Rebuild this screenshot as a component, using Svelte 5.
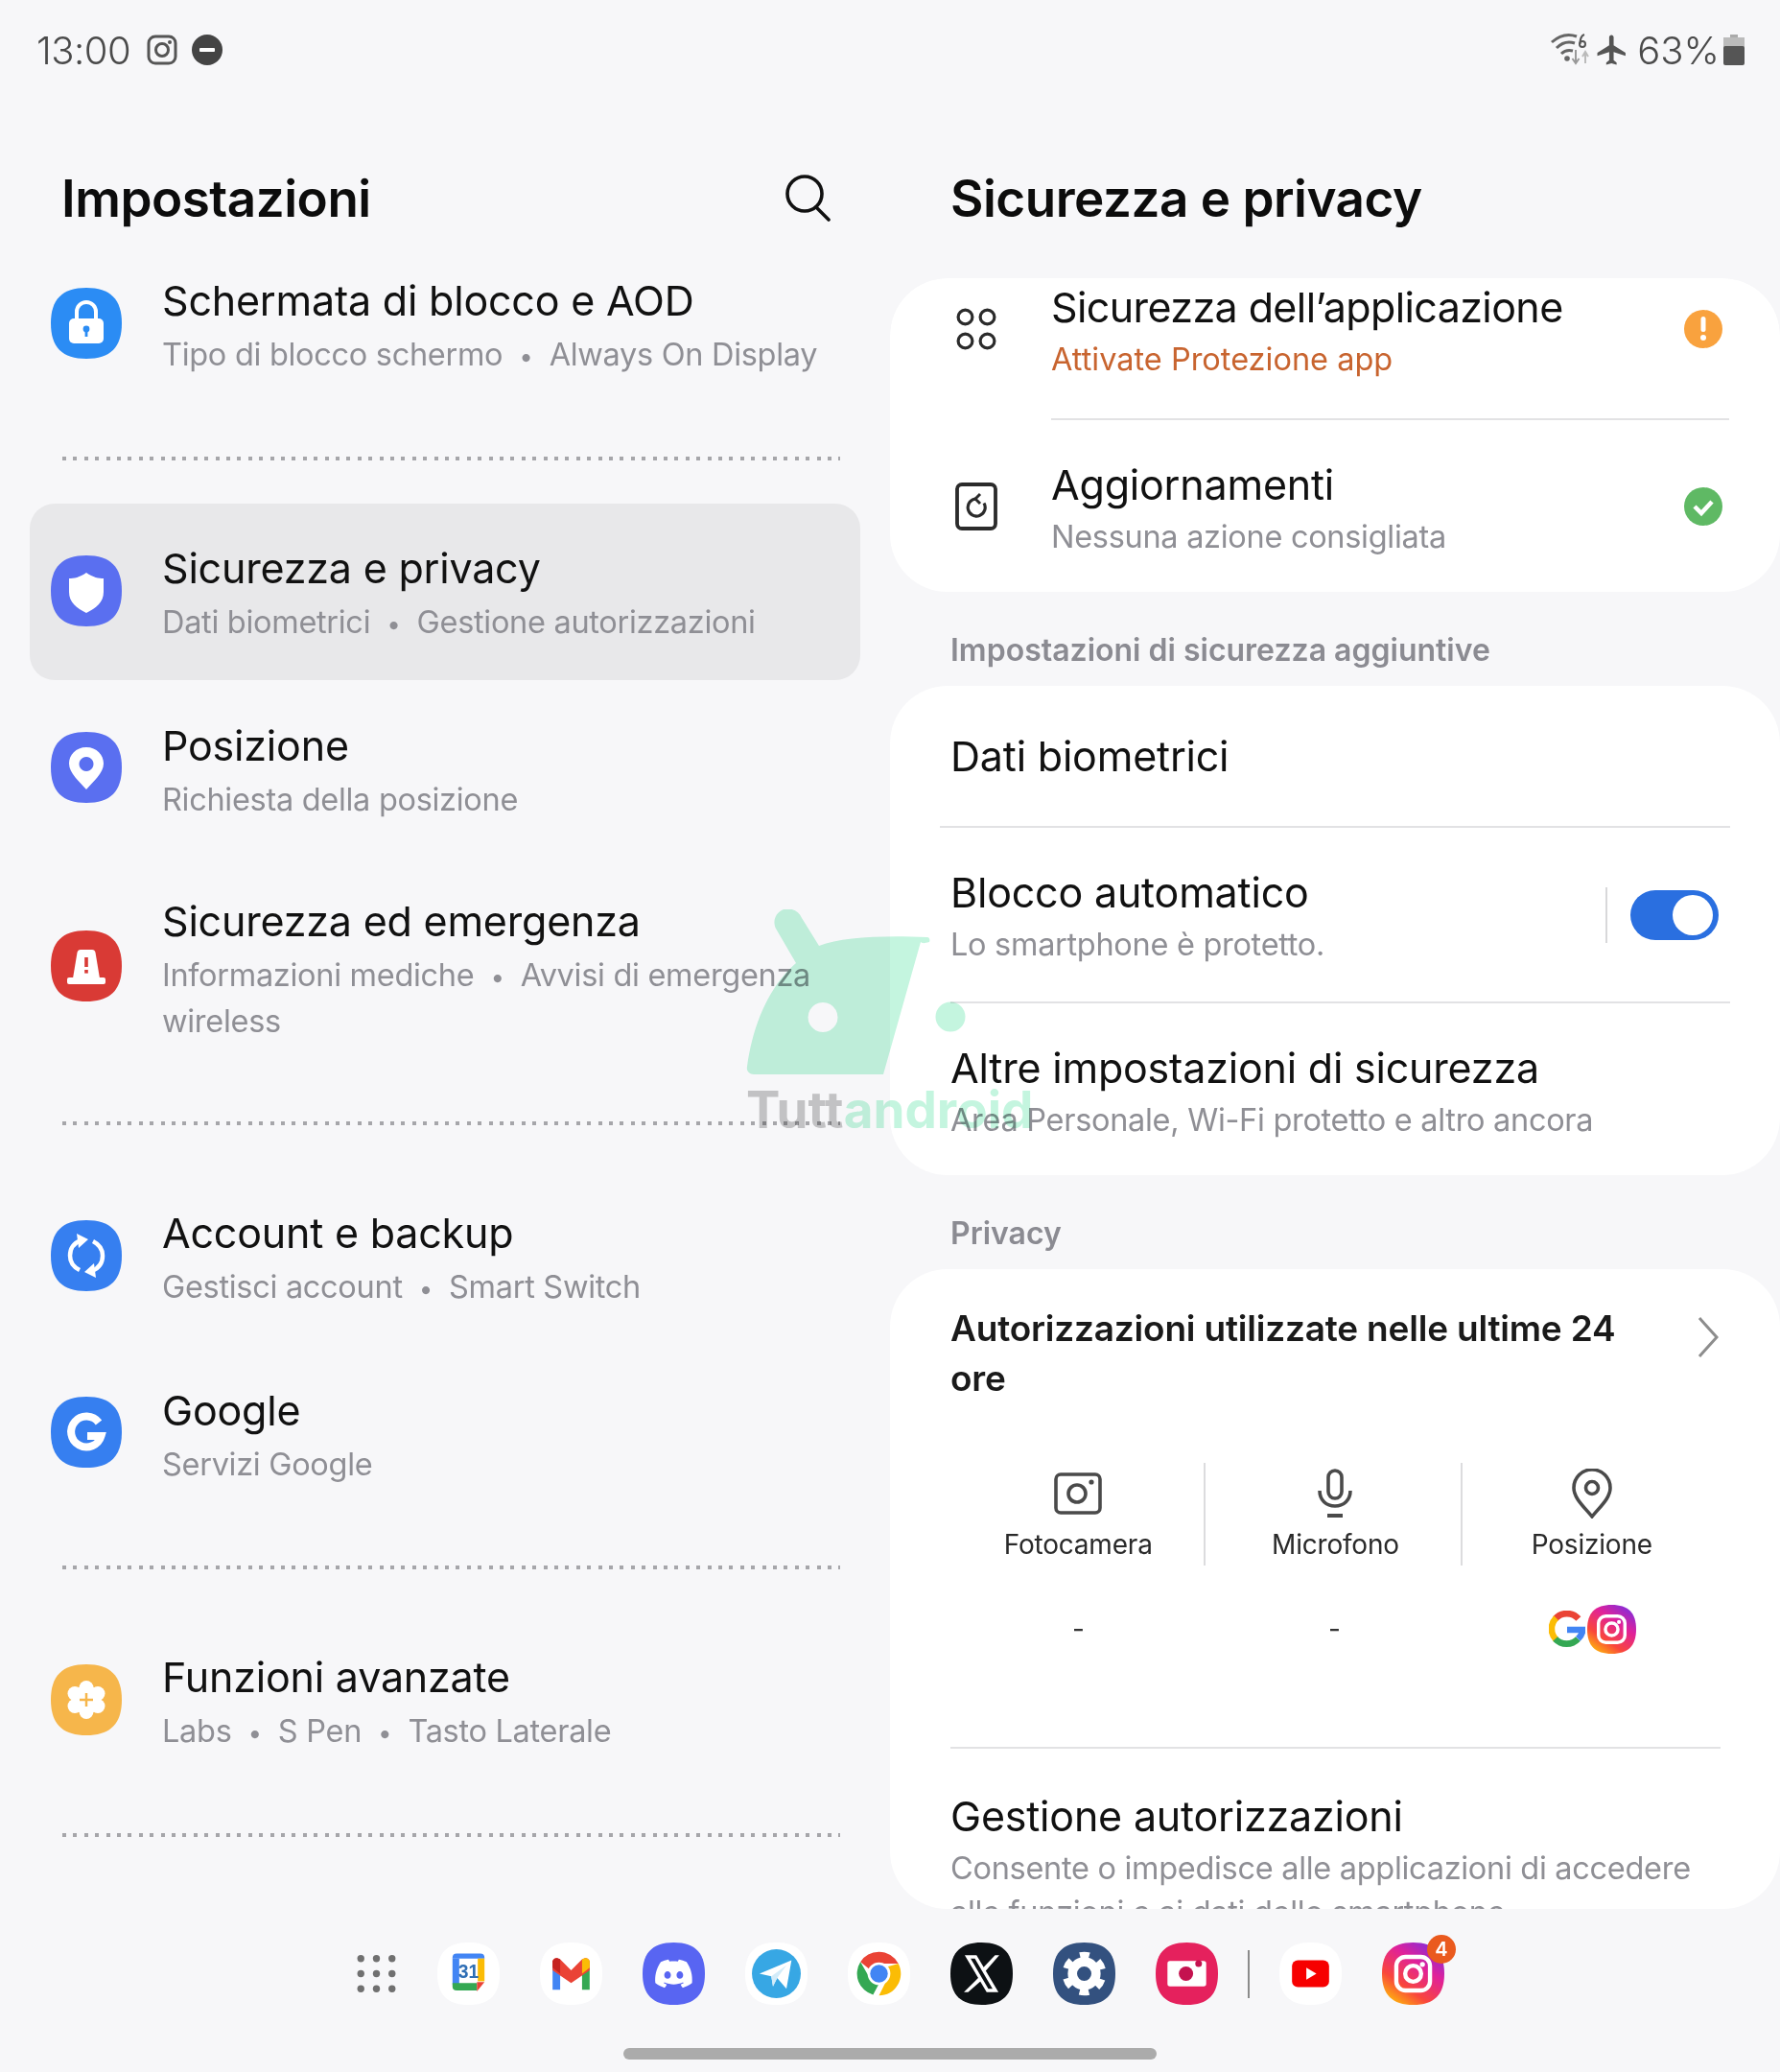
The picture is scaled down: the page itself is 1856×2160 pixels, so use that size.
<script>
  const shape = "M37 0C62 0 74 12 74 37S62 74 37 74 0 62 0 37 12 0 37 0Z";
  const dots = [0, 1, 2].flatMap((y) => [0, 1, 2].map((x) => ({ x: 18.5 + x * 18.5, y: 19 + y * 18 })));
</script>

{#snippet squircle(color, glyph)}
  <svg class="tile" viewBox="0 0 74 74" aria-hidden="true">
    <path d={shape} fill={color} />
    {@render glyph()}
  </svg>
{/snippet}

{#snippet row(title, subs, color, glyph, cls = "")}
  <div class="row {cls}">
    {@render squircle(color, glyph)}
    <div class="text">
      <div class="title">{title}</div>
      <div class="sub">
        {#each subs as s, i}{#if i > 0}<span class="dot">•</span>{/if}{s}{/each}
      </div>
    </div>
  </div>
{/snippet}

{#snippet lock()}
  <path d="M27 33V25a10 10 0 0 1 20 0V33" fill="none" stroke="#fff" stroke-width="4" />
  <rect x="19" y="32" width="36" height="26" rx="5" fill="#fff" />
  <circle cx="37" cy="43" r="3.4" fill="#2b8cf4" />
  <rect x="35.6" y="43" width="2.8" height="8" fill="#2b8cf4" />
{/snippet}
{#snippet shield()}
  <path d="M37 18C44 23 50 24 55 24V38C55 49 47 55 37 60 27 55 19 49 19 38V24C24 24 30 23 37 18Z" fill="#fff" />
{/snippet}
{#snippet pin()}
  <path fill-rule="evenodd" d="M37 16C48 16 55 24 55 33 55 43 44 52 37 60 30 52 19 43 19 33 19 24 26 16 37 16ZM37 26A7.5 7.5 0 1 0 37.01 26Z" fill="#fff" />
{/snippet}
{#snippet cone()}
  <path d="M31 20H43C45 20 46 21 46.500 23L51 50H23L27.500 23C28 21 29 20 31 20Z" fill="#fff" />
  <rect x="17" y="49" width="40" height="7" rx="2" fill="#fff" />
  <rect x="35.200" y="28" width="3.600" height="10" fill="#d93a35" />
  <rect x="35.200" y="41" width="3.600" height="3.600" fill="#d93a35" />
{/snippet}
{#snippet sync()}
  <g fill="none" stroke="#fff" stroke-width="4.500">
    <path d="M31 21C24 24 20 30 20 37 20 44 24 49 30 52" />
    <path d="M43 53C50 50 54 44 54 37 54 30 50 25 44 22" />
  </g>
  <path d="M27 14L39 20 29 29Z M47 60L35 54 45 45Z" fill="#fff" />
{/snippet}
{#snippet gLetter()}
  <path d="M50 27A16 16 0 1 0 52.500 41H38" fill="none" stroke="#fff" stroke-width="8" />
{/snippet}
{#snippet flower()}
  <g fill="#fff">
    <circle cx="37" cy="37" r="15" />
    <circle cx="37" cy="24.500" r="7.500" /><circle cx="37" cy="49.500" r="7.500" />
    <circle cx="25" cy="30.500" r="7.500" /><circle cx="49" cy="30.500" r="7.500" />
    <circle cx="25" cy="43.500" r="7.500" /><circle cx="49" cy="43.500" r="7.500" />
  </g>
  <path d="M37 30V44M30 37H44" stroke="#f6b64b" stroke-width="2.500" />
{/snippet}

{#snippet igGlyph(stroke)}
  <rect x="17" y="17" width="40" height="40" rx="11" fill="none" stroke={stroke} stroke-width="5" />
  <circle cx="37" cy="37" r="9.500" fill="none" stroke={stroke} stroke-width="5" />
  <circle cx="48" cy="26" r="3" fill={stroke} />
{/snippet}

{#snippet igTile()}
  <svg class="tile-fill" viewBox="0 0 74 74" aria-hidden="true">
    <defs>
      <linearGradient id="ig" x1="0.15" y1="1" x2="0.85" y2="0">
        <stop offset="0" stop-color="#ffc107" />
        <stop offset="0.3" stop-color="#f9463c" />
        <stop offset="0.65" stop-color="#e0219a" />
        <stop offset="1" stop-color="#7a2ee0" />
      </linearGradient>
    </defs>
    <path d={shape} fill="url(#ig)" />
    {@render igGlyph("#fff")}
  </svg>
{/snippet}

<div class="screen">
  <div class="status">
    <div class="status-left">
      <span class="time">13:00</span>
      <svg class="st-ig" viewBox="0 0 32 32" aria-hidden="true">
        <rect x="2" y="2" width="28" height="28" rx="7" fill="none" stroke="#555" stroke-width="3" />
        <circle cx="16" cy="16" r="6.500" fill="none" stroke="#555" stroke-width="3" />
        <circle cx="24" cy="8" r="2" fill="#555" />
      </svg>
      <svg class="st-dnd" viewBox="0 0 32 32" aria-hidden="true">
        <circle cx="16" cy="16" r="16" fill="#444" />
        <rect x="8" y="14" width="16" height="4" rx="1" fill="#fff" />
      </svg>
    </div>
    <div class="status-right">
      <svg class="st-wifi" viewBox="0 0 42 36" aria-hidden="true">
        <g fill="none" stroke="#666" stroke-width="3">
          <path d="M1 10C10 2 19 1 27 4" />
          <path d="M6 16C12 10 19 9 25 11" />
          <path d="M11 22C15 18 19 18 23 19" />
        </g>
        <circle cx="17" cy="27" r="2.800" fill="#666" />
        <path d="M26 18V31M22.500 27L26 32 29.500 27" fill="none" stroke="#999" stroke-width="2" />
        <path d="M36 32V22M33 25L36 20 39 25" fill="none" stroke="#bbb" stroke-width="2" />
        <circle cx="33" cy="12" r="3" fill="none" stroke="#555" stroke-width="2" />
        <path d="M30.500 12C30.500 6 32 3 35 2" fill="none" stroke="#555" stroke-width="2" />
      </svg>
      <svg class="st-plane" viewBox="1 1 22 22" aria-hidden="true">
        <path d="M21 16v-2l-8-5V3.500c0-.83-.67-1.500-1.500-1.500S10 2.670 10 3.500V9l-8 5v2l8-2.500V19l-2 1.500V22l3.500-1 3.500 1v-1.500L13 19v-5.500l8 2.500z" fill="#555" />
      </svg>
      <span class="pct">63%</span>
      <svg class="st-bat" viewBox="0 0 22 32" aria-hidden="true">
        <rect x="7" y="0" width="8" height="4" fill="#aaa" />
        <rect x="0" y="3" width="22" height="11" fill="#bbb" />
        <rect x="0" y="12" width="22" height="20" rx="2" fill="#555" />
      </svg>
    </div>
  </div>

  <div class="panels">
    <section class="left">
      <header class="left-head">
        <h1>Impostazioni</h1>
        <svg class="search" viewBox="0 0 48 50" aria-hidden="true">
          <circle cx="21" cy="21" r="18" fill="none" stroke="#111" stroke-width="3.600" />
          <path d="M33 35L46 48" stroke="#111" stroke-width="3.600" stroke-linecap="round" />
        </svg>
      </header>
      {@render row("Schermata di blocco e AOD", ["Tipo di blocco schermo", "Always On Display"], "#2b8cf4", lock)}
      <div class="sep"></div>
      {@render row("Sicurezza e privacy", ["Dati biometrici", "Gestione autorizzazioni"], "#5a6ff0", shield, "selected")}
      {@render row("Posizione", ["Richiesta della posizione"], "#5a6ff0", pin)}
      {@render row("Sicurezza ed emergenza", ["Informazioni mediche", "Avvisi di emergenza wireless"], "#d93a35", cone, "wrap")}
      <div class="sep"></div>
      {@render row("Account e backup", ["Gestisci account", "Smart Switch"], "#367ff0", sync)}
      {@render row("Google", ["Servizi Google"], "#367ff0", gLetter)}
      <div class="sep"></div>
      {@render row("Funzioni avanzate", ["Labs", "S Pen", "Tasto Laterale"], "#f6b64b", flower)}
      <div class="sep"></div>
    </section>

    <section class="right">
      <h1 class="right-title">Sicurezza e privacy</h1>
      <div class="scroller">
        <div class="card">
          <div class="app-row first">
            <svg class="line-ic" viewBox="0 0 74 74" aria-hidden="true">
              <g fill="none" stroke="#2b2b2b" stroke-width="3.200">
                <circle cx="25.500" cy="24.500" r="7.400" /><circle cx="48.500" cy="24.500" r="7.400" />
                <circle cx="25.500" cy="49.500" r="7.400" /><circle cx="48.500" cy="49.500" r="7.400" />
              </g>
            </svg>
            <div class="text grow">
              <div class="title tight">Sicurezza dell’applicazione</div>
              <div class="sub warn">Attivate Protezione app</div>
            </div>
            <svg class="state" viewBox="0 0 40 40" aria-hidden="true">
              <circle cx="20" cy="20" r="20" fill="#f9a23e" />
              <rect x="17.500" y="7" width="5" height="16" rx="2.500" fill="#fff" />
              <circle cx="20" cy="29" r="3" fill="#fff" />
            </svg>
          </div>
          <div class="div inset-app"></div>
          <div class="app-row second">
            <svg class="line-ic" viewBox="0 0 74 74" aria-hidden="true">
              <rect x="17" y="14" width="40" height="46" rx="5" fill="none" stroke="#2b2b2b" stroke-width="3.800" />
              <path d="M37 29A9 9 0 1 0 45 33.500" fill="none" stroke="#2b2b2b" stroke-width="3.200" />
              <path d="M41 24L36 29 41 34" fill="none" stroke="#2b2b2b" stroke-width="3" />
            </svg>
            <div class="text grow">
              <div class="title">Aggiornamenti</div>
              <div class="sub">Nessuna azione consigliata</div>
            </div>
            <svg class="state" viewBox="0 0 40 40" aria-hidden="true">
              <circle cx="20" cy="20" r="20" fill="#5fb964" />
              <path d="M11 20L18 27 29 15" fill="none" stroke="#fff" stroke-width="4.500" />
            </svg>
          </div>
        </div>

        <div class="sec">Impostazioni di sicurezza aggiuntive</div>

        <div class="card">
          <div class="plain single"><div class="title">Dati biometrici</div></div>
          <div class="div inset-wide"></div>
          <div class="plain toggle-row">
            <div class="text grow">
              <div class="title">Blocco automatico</div>
              <div class="sub">Lo smartphone è protetto.</div>
            </div>
            <div class="vbar"></div>
            <div class="switch"><span class="knob"></span></div>
          </div>
          <div class="div inset-std"></div>
          <div class="plain last">
            <div class="text">
              <div class="title">Altre impostazioni di sicurezza</div>
              <div class="sub">Area Personale, Wi-Fi protetto e altro ancora</div>
            </div>
          </div>
        </div>

        <div class="sec">Privacy</div>

        <div class="card">
          <div class="perm-head">
            <div class="perm-title">Autorizzazioni utilizzate nelle ultime 24 ore</div>
            <svg class="chev" viewBox="0 0 22 44" aria-hidden="true">
              <path d="M2 2L20 22 2 42" fill="none" stroke="#8d8d8d" stroke-width="3" />
            </svg>
          </div>
          <div class="perm-grid">
            <div class="perm-col">
              <svg class="perm-ic" viewBox="0 0 60 52" aria-hidden="true">
                <rect x="7" y="6" width="46" height="40" rx="5" fill="none" stroke="#4a4a4a" stroke-width="3.600" />
                <circle cx="29" cy="26" r="9" fill="none" stroke="#4a4a4a" stroke-width="3.600" />
                <circle cx="44" cy="14" r="2.600" fill="#4a4a4a" />
              </svg>
              <span class="perm-label">Fotocamera</span>
            </div>
            <div class="perm-col ruled">
              <svg class="perm-ic" viewBox="0 0 60 52" aria-hidden="true">
                <rect x="23" y="2" width="14" height="29" rx="7" fill="none" stroke="#4a4a4a" stroke-width="3.600" />
                <path d="M14 23C14 33 21 39 30 39S46 33 46 23" fill="none" stroke="#4a4a4a" stroke-width="3.600" />
                <path d="M22 49H38" stroke="#4a4a4a" stroke-width="4" />
              </svg>
              <span class="perm-label">Microfono</span>
            </div>
            <div class="perm-col ruled">
              <svg class="perm-ic" viewBox="0 0 60 52" aria-hidden="true">
                <path d="M30 50C22 40 11 31 11 20A19 19 0 0 1 49 20C49 31 38 40 30 50Z" fill="none" stroke="#4a4a4a" stroke-width="3.600" />
                <circle cx="30" cy="20" r="6.500" fill="none" stroke="#4a4a4a" stroke-width="3.600" />
              </svg>
              <span class="perm-label">Posizione</span>
            </div>
          </div>
          <div class="perm-used">
            <span class="dash">-</span>
            <span class="dash">-</span>
            <span class="apps">
              <svg class="small-g" viewBox="0 0 40 40" aria-hidden="true">
                <g fill="none" stroke-width="7">
                  <path d="M32.500 9A17 17 0 0 0 7 9" stroke="#ea4335" />
                  <path d="M8 8A17 17 0 0 0 8 32" stroke="#fbbc05" />
                  <path d="M7 31A17 17 0 0 0 32 31" stroke="#34a853" />
                  <path d="M32 31C35 28 37 25 37 21H20" stroke="#4285f4" />
                </g>
              </svg>
              <span class="small-ig">{@render igTile()}</span>
            </span>
          </div>
          <div class="div inset-perm"></div>
          <div class="plain gestione">
            <div class="text">
              <div class="title">Gestione autorizzazioni</div>
              <div class="sub">Consente o impedisce alle applicazioni di accedere alle funzioni e ai dati dello smartphone.</div>
            </div>
          </div>
        </div>
      </div>
    </section>
  </div>

  <div class="dock">
    <svg class="dock-ic apps-grid" viewBox="0 0 74 74" aria-hidden="true">
      {#each dots as d}<circle cx={d.x} cy={d.y} r="4.200" fill="#707070" />{/each}
    </svg>
    <svg class="dock-ic" viewBox="0 0 74 74" aria-hidden="true">
      <path d={shape} fill="#fff" />
      <rect x="18" y="18" width="38" height="38" fill="#fff" />
      <path d="M18 18Q18 13 23 13H51Q56 13 56 18V19H18Z" fill="#4285f4" />
      <path d="M18 19V50H26V19Z" fill="#4285f4" />
      <path d="M48 19H56V46H48Z" fill="#fbbc05" />
      <path d="M18 48H47V57H23Q18 57 18 52Z" fill="#34a853" />
      <path d="M47 47H56L47 58Z" fill="#ea4335" />
      <text x="37" y="42" class="cal">31</text>
    </svg>
    <svg class="dock-ic" viewBox="0 0 74 74" aria-hidden="true">
      <path d={shape} fill="#fff" />
      <path d="M15 22V56H24V35Z" fill="#4285f4" />
      <path d="M50 35V56H59V22Z" fill="#34a853" />
      <path d="M15 22C17 17 21 18 24 20L37 33 50 20C53 18 57 17 59 22V33L37 48 15 33Z" fill="#ea4335" />
      <path d="M50 20C53 18 57 17 59 22V30L50 37Z" fill="#fbbc05" />
      <path d="M15 22C17 17 21 18 24 20V37L15 30Z" fill="#c5221f" />
    </svg>
    <svg class="dock-ic" viewBox="0 0 74 74" aria-hidden="true">
      <path d={shape} fill="#5865f2" />
      <g transform="translate(15 15) scale(1.830)">
        <path d="M20.317 4.370a19.791 19.791 0 0 0-4.885-1.515.074.074 0 0 0-.079.037c-.211.375-.445.865-.608 1.250-1.845-.276-3.680-.276-5.487 0-.164-.393-.406-.874-.618-1.250a.077.077 0 0 0-.079-.037 19.736 19.736 0 0 0-4.885 1.515.070.070 0 0 0-.032.028C.533 9.046-.319 13.580.099 18.058a.082.082 0 0 0 .031.056c2.053 1.508 4.041 2.423 5.993 3.029a.078.078 0 0 0 .084-.028c.462-.630.873-1.295 1.226-1.994a.076.076 0 0 0-.042-.106c-.653-.248-1.274-.550-1.872-.892a.077.077 0 0 1-.008-.128c.126-.094.252-.192.372-.291a.074.074 0 0 1 .078-.011c3.928 1.793 8.180 1.793 12.061 0a.074.074 0 0 1 .079.010c.120.099.246.198.373.292a.077.077 0 0 1-.007.128 12.299 12.299 0 0 1-1.873.891.077.077 0 0 0-.041.107c.360.698.772 1.363 1.225 1.993a.076.076 0 0 0 .084.029c1.961-.607 3.950-1.522 6.002-3.029a.077.077 0 0 0 .031-.055c.500-5.177-.838-9.674-3.548-13.660a.061.061 0 0 0-.031-.029zM8.020 15.331c-1.183 0-2.157-1.086-2.157-2.419 0-1.333.956-2.419 2.157-2.419 1.211 0 2.176 1.095 2.157 2.419 0 1.333-.956 2.419-2.157 2.419zm7.975 0c-1.183 0-2.157-1.086-2.157-2.419 0-1.333.955-2.419 2.157-2.419 1.211 0 2.176 1.095 2.157 2.419 0 1.333-.946 2.419-2.157 2.419z" fill="#fff" />
      </g>
    </svg>
    <svg class="dock-ic" viewBox="0 0 74 74" aria-hidden="true">
      <path d={shape} fill="#fff" />
      <circle cx="37" cy="37" r="29" fill="#37a7e4" />
      <path d="M17 37L55 21 49 55 38 42 33 52 31 40Z" fill="#fff" />
      <path d="M31 40L49 27 38 42 33 52Z" fill="#d3ecf9" />
    </svg>
    <svg class="dock-ic" viewBox="0 0 74 74" aria-hidden="true">
      <path d={shape} fill="#fff" />
      <path d="M37 11A26 26 0 0 1 60 25H37A12 12 0 0 0 26 32L15 23A26 26 0 0 1 37 11Z" fill="#ea4335" />
      <path d="M15 23L26 42A12 12 0 0 0 37 49L30 62A26 26 0 0 1 15 23Z" fill="#34a853" />
      <path d="M60 25A26 26 0 0 1 37 63L47 43A12 12 0 0 0 46 29Z" fill="#fbbc05" />
      <circle cx="37" cy="37" r="13.500" fill="#fff" />
      <circle cx="37" cy="37" r="10.500" fill="#4285f4" />
    </svg>
    <svg class="dock-ic" viewBox="0 0 74 74" aria-hidden="true">
      <path d={shape} fill="#0d1114" />
      <path fill-rule="evenodd" d="M17 15H31L57 59H43ZM24 19L45 55H50L29 19Z" fill="#fff" />
      <path d="M53 15H58L40 36 37 32ZM34 41L37 45 21 59H16Z" fill="#fff" />
    </svg>
    <svg class="dock-ic" viewBox="0 0 74 74" aria-hidden="true">
      <path d={shape} fill="#33517f" />
      <circle cx="37" cy="37" r="22" fill="none" stroke="#fff" stroke-width="8" stroke-dasharray="11 12.040" transform="rotate(75.700 37 37)" />
      <circle cx="37" cy="37" r="14" fill="none" stroke="#fff" stroke-width="11" />
    </svg>
    <svg class="dock-ic" viewBox="0 0 74 74" aria-hidden="true">
      <path d={shape} fill="#e5215d" />
      <path d="M17 22H57Q60 22 60 25V49Q60 52 57 52H17Q14 52 14 49V25Q14 22 17 22Z" fill="#fff" />
      <circle cx="36" cy="37" r="8.500" fill="#c4124f" />
      <circle cx="51" cy="25" r="4" fill="#c4124f" />
    </svg>
    <div class="dock-sep"></div>
    <svg class="dock-ic" viewBox="0 0 74 74" aria-hidden="true">
      <path d={shape} fill="#fff" />
      <rect x="15" y="21" width="44" height="32" rx="7" fill="#f70000" />
      <path d="M32 30L44 37 32 44Z" fill="#fff" />
    </svg>
    <div class="dock-ig">
      {@render igTile()}
      <span class="badge">4</span>
    </div>
  </div>

  <div class="home"><span class="pill"></span></div>

  <div class="mark">
    <svg class="mark-art" viewBox="0 0 320 210" aria-hidden="true">
      <path fill-rule="evenodd" d="M39 0C48-2 55 2 58 9L76 38C100 29 140 27 189 29 191 29 192 32 191 34 186 35 185 36 182 34L143 172H8C3 172 0 168 1 164 7 120 24 80 52 56L31 20C27 12 31 3 39 0ZM80 97A15.500 15.500 0 1 0 80.010 97Z" fill="#c4f5df" />
      <circle cx="213" cy="112" r="15.500" fill="#c4f5df" />
    </svg>
    <div class="mark-text"><span class="mark-grey">Tutt</span><span class="mark-green">android</span></div>
  </div>
</div>

<style>
  :global(body) {
    margin: 0;
    background: #f7f7f9;
  }
  .screen {
    position: relative;
    width: 1856px;
    height: 2160px;
    overflow: hidden;
    background: #f7f7f9;
    font-family: Inter, "Noto Sans", sans-serif;
    color: #111;
  }
  .status {
    height: 104px;
    display: flex;
    justify-content: space-between;
    align-items: center;
    padding: 0 37px 0 38px;
    box-sizing: border-box;
  }
  .status-left,
  .status-right {
    display: flex;
    align-items: center;
  }
  .time {
    font-size: 40px;
    font-weight: 300;
    color: #4a4a4a;
    letter-spacing: -0.5px;
    width: 115px;
  }
  .st-ig,
  .st-dnd {
    width: 32px;
    height: 32px;
  }
  .st-dnd {
    margin-left: 15px;
  }
  .st-wifi {
    width: 42px;
    height: 36px;
    margin-right: 5px;
  }
  .st-plane {
    width: 34px;
    height: 34px;
    margin-right: 9px;
  }
  .pct {
    font-size: 40px;
    font-weight: 300;
    color: #4a4a4a;
    margin-right: 4px;
  }
  .st-bat {
    width: 22px;
    height: 32px;
  }
  .panels {
    height: 1886px;
    display: flex;
  }
  .left {
    width: 928px;
    flex: none;
  }
  .left-head {
    height: 142px;
    padding: 68px 62px 0 64px;
    box-sizing: border-box;
    display: flex;
    align-items: flex-start;
    justify-content: space-between;
  }
  h1 {
    margin: 0;
    font-size: 53px;
    line-height: 70px;
    font-weight: 600;
    letter-spacing: -0.5px;
    color: #0c0c0c;
  }
  .search {
    width: 48px;
    height: 50px;
    margin-top: 9px;
  }
  .row {
    display: flex;
    align-items: center;
    gap: 42px;
    height: 184px;
    box-sizing: border-box;
    margin: 0 31px;
    padding: 39px 22px 37px;
    border-radius: 26px;
  }
  .row.selected {
    background: #e8e8ea;
  }
  .row.wrap {
    height: 230px;
  }
  .row .sub {
    margin-top: 4px;
  }
  .tile {
    width: 74px;
    height: 74px;
    flex: none;
    margin-bottom: 4px;
  }
  .tile-fill {
    display: block;
    width: 100%;
    height: 100%;
  }
  .text {
    min-width: 0;
  }
  .grow {
    flex: 1;
  }
  .title {
    font-size: 43px;
    line-height: 60px;
    font-weight: 400;
    color: #111;
    letter-spacing: -0.2px;
  }
  .title.tight {
    letter-spacing: -0.6px;
  }
  .sub {
    font-size: 32.500px;
    line-height: 46px;
    margin-top: 2px;
    color: #8f8f95;
    letter-spacing: -0.3px;
  }
  .dot {
    margin: 0 17px;
    font-size: 0.8em;
  }
  .warn {
    color: #c8642f;
    letter-spacing: 0;
  }
  .sep {
    height: 95px;
    box-sizing: border-box;
    padding-top: 46px;
    margin: 0 52px 0 65px;
  }
  .sep::before {
    content: "";
    display: block;
    height: 4px;
    background: repeating-linear-gradient(90deg, #a6a6aa 0 4px, transparent 4px 11.4px);
  }
  .right {
    flex: 1;
    min-width: 0;
  }
  .right-title {
    height: 186px;
    box-sizing: border-box;
    padding: 68px 0 0 991px;
    margin-left: -928px;
    width: 1856px;
  }
  .scroller {
    height: 1700px;
    overflow: hidden;
    border-radius: 60px;
    background: #f7f7f9;
  }
  .card {
    background: #fff;
    border-radius: 60px;
    overflow: hidden;
  }
  .app-row {
    display: flex;
    align-items: center;
    padding: 0 60px 0 53px;
    gap: 41px;
  }
  .app-row.first {
    padding-bottom: 38px;
  }
  .app-row.second {
    padding-top: 37px;
    padding-bottom: 34px;
  }
  .line-ic {
    width: 74px;
    height: 74px;
    flex: none;
    margin-bottom: 2px;
  }
  .state {
    width: 40px;
    height: 40px;
    flex: none;
    margin-bottom: 3px;
  }
  .div {
    height: 2px;
    background: #e2e2e4;
  }
  .inset-app {
    margin: 0 53px 0 168px;
  }
  .inset-wide {
    margin: 0 52px;
  }
  .inset-std {
    margin: 0 52px 0 63px;
  }
  .inset-perm {
    margin: 0 62px 0 63px;
  }
  .sec {
    height: 98px;
    box-sizing: border-box;
    padding: 41px 0 0 63px;
    font-size: 32px;
    line-height: 40px;
    font-weight: 600;
    color: #8b8b92;
  }
  .plain {
    padding-left: 63px;
    padding-right: 64px;
    display: flex;
    align-items: center;
  }
  .single {
    height: 146px;
  }
  .toggle-row {
    padding-top: 37px;
    padding-bottom: 36px;
  }
  .last {
    padding-top: 37px;
    padding-bottom: 34px;
  }
  .vbar {
    width: 2px;
    height: 58px;
    background: #d8d8da;
    margin-right: 24px;
  }
  .switch {
    width: 92px;
    height: 52px;
    border-radius: 26px;
    background: #2a6fe0;
    position: relative;
  }
  .knob {
    position: absolute;
    right: 6px;
    top: 5px;
    width: 42px;
    height: 42px;
    border-radius: 50%;
    background: #fff;
  }
  .perm-head {
    display: flex;
    padding: 36px 64px 0 63px;
    gap: 40px;
  }
  .perm-title {
    width: 690px;
    flex: 1;
    font-size: 37px;
    line-height: 52px;
    font-weight: 600;
    color: #1a1a1a;
    letter-spacing: -0.2px;
  }
  .chev {
    width: 22px;
    height: 44px;
    margin-top: 13px;
    flex: none;
  }
  .perm-grid {
    display: grid;
    grid-template-columns: repeat(3, 1fr);
    margin: 62px 66px 0 60px;
    height: 107px;
  }
  .perm-col {
    display: flex;
    flex-direction: column;
    align-items: center;
    gap: 8px;
    box-sizing: border-box;
    padding-left: 5px;
  }
  .perm-col.ruled {
    border-left: 2px solid #dcdcde;
  }
  .perm-ic {
    width: 60px;
    height: 52px;
    margin-top: 6px;
  }
  .perm-label {
    font-size: 28px;
    line-height: 38px;
    color: #2a2a2a;
    letter-spacing: -0.2px;
  }
  .perm-used {
    display: grid;
    grid-template-columns: repeat(3, 1fr);
    justify-items: center;
    align-items: center;
    margin: 31px 64px 0 63px;
    height: 70px;
    padding-bottom: 88px;
  }
  .dash {
    font-size: 28px;
    color: #333;
  }
  .apps {
    display: flex;
    align-items: center;
    margin-left: 4px;
  }
  .small-g {
    width: 38px;
    height: 38px;
  }
  .small-ig {
    width: 51px;
    height: 51px;
    margin-left: 2px;
  }
  .gestione {
    padding-top: 40px;
  }
  .dock {
    height: 138px;
    box-sizing: border-box;
    padding: 35px 0 0 360px;
    display: flex;
    align-items: flex-start;
    gap: 42px;
  }
  .dock-ic {
    width: 65px;
    height: 65px;
    flex: none;
  }
  .apps-grid {
    margin-right: -11px;
  }
  .cal {
    font-family: "Liberation Sans", sans-serif;
    font-size: 22px;
    font-weight: 700;
    fill: #2f6fb5;
    text-anchor: middle;
  }
  .dock-sep {
    width: 2px;
    height: 50px;
    margin: 8px -11px 0 -11px;
    background: #8b8b8b;
  }
  .dock-ig {
    position: relative;
    width: 65px;
    height: 65px;
  }
  .badge {
    position: absolute;
    top: -8px;
    right: -12px;
    width: 30px;
    height: 30px;
    border-radius: 50%;
    background: #ea5a1e;
    color: #fff;
    font-size: 20px;
    font-weight: 600;
    line-height: 30px;
    text-align: center;
  }
  .home {
    height: 32px;
    display: flex;
    justify-content: center;
  }
  .pill {
    width: 556px;
    height: 12px;
    margin-top: 7px;
    border-radius: 6px;
    background: #ababab;
  }
  .mark {
    position: absolute;
    left: 778px;
    top: 948px;
    width: 320px;
    mix-blend-mode: multiply;
    pointer-events: none;
  }
  .mark-art {
    display: block;
    width: 320px;
    height: 210px;
  }
  .mark-text {
    position: absolute;
    left: 0;
    top: 179px;
    font-size: 53px;
    line-height: 60px;
    font-weight: 700;
    white-space: nowrap;
  }
  .mark-grey {
    color: #c9c9c9;
  }
  .mark-green {
    color: #c4f5df;
  }
</style>
